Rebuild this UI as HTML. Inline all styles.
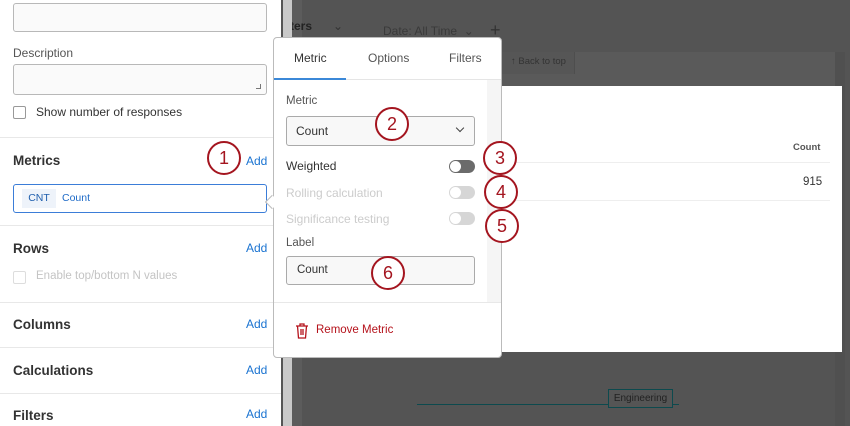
<!DOCTYPE html>
<html><head><meta charset="utf-8"><style>
*{box-sizing:border-box;margin:0;padding:0}
body{width:850px;height:426px;overflow:hidden;position:relative;font-family:"Liberation Sans",sans-serif;background:#555;color:#333}
.a{position:absolute}
.t{font-size:12px;white-space:nowrap}
.h{font-size:13.5px;font-weight:bold;color:#333}
.add{color:#1a73d1;font-size:12px}
.hr{height:1px;background:#e8e8e8}
.c{position:absolute;width:34px;height:34px;border:2.5px solid #a4151f;border-radius:50%;background:#fff;color:#a4151f;font-size:18px;text-align:center;line-height:31px}
.tg{position:absolute;width:26px;height:13px;border-radius:7px}
.tg::after{content:"";position:absolute;left:1px;top:1px;width:11px;height:11px;border-radius:50%;background:#fff}
</style></head><body>
<div class="a" style="left:292px;top:0;width:558px;height:426px;background:#545454"></div>
<div class="a" style="left:292px;top:0;width:10px;height:426px;background:#5c5c5c"></div>
<div class="a t" style="left:290px;top:19px;color:#222;font-weight:bold;font-size:12px">ters</div>
<div class="a t" style="left:333px;top:19px;color:#333;font-size:12px">&#8964;</div>
<div class="a t" style="left:383px;top:24px;color:#3a3a3a;font-size:12px">Date: All Time &nbsp;&#8964;</div>
<div class="a" style="left:490px;top:22px;color:#333;font-size:18px;line-height:16px">+</div>
<div class="a" style="left:500px;top:52px;width:335px;height:34px;background:#5a5a5a"></div>
<div class="a" style="left:500px;top:52px;width:75px;height:22px;background:#565656;border-right:1px solid #4e4e4e"></div>
<div class="a t" style="left:511px;top:56px;color:#333;font-size:9.5px">&#8593; Back to top</div>
<div class="a" style="left:835px;top:52px;width:10px;height:374px;background:#505050"></div>
<div class="a" style="left:502px;top:86px;width:340px;height:266px;background:#fff"></div>
<div class="a t" style="left:793px;top:142px;font-size:9.5px;font-weight:bold;color:#555">Count</div>
<div class="a" style="left:502px;top:162px;width:328px;height:1px;background:#eee"></div>
<div class="a t" style="left:803px;top:176px;font-size:11.5px;color:#333">915</div>
<div class="a" style="left:502px;top:200px;width:328px;height:1px;background:#eee"></div>
<div class="a" style="left:417px;top:404px;width:262px;height:1px;background:#0d4a4e"></div>
<div class="a t" style="left:608px;top:389px;width:65px;height:19px;border:1px solid #0d4a4e;background:#555;color:#222;font-size:10px;line-height:17px;text-align:center">Engineering</div>
<div class="a" style="left:0;top:0;width:281px;height:426px;background:#fff"></div>
<div class="a" style="left:283px;top:0;width:9px;height:426px;background:#c9c9c9"></div>
<div class="a" style="left:13px;top:3px;width:254px;height:29px;border:1px solid #b8b8b8;border-radius:3px;background:#fafafa"></div>
<div class="a t" style="left:13px;top:46px;color:#555">Description</div>
<div class="a" style="left:13px;top:64px;width:254px;height:31px;border:1px solid #b8b8b8;border-radius:3px;background:#fafafa"></div>
<div class="a" style="left:256px;top:84px;width:5px;height:5px;border-right:1px solid #777;border-bottom:1px solid #777"></div>
<div class="a" style="left:13px;top:106px;width:13px;height:13px;border:1px solid #999;border-radius:2px"></div>
<div class="a t" style="left:36px;top:105px;color:#333">Show number of responses</div>
<div class="a hr" style="left:0;top:137px;width:281px"></div>
<div class="a h" style="left:13px;top:153px">Metrics</div>
<div class="a add" style="left:246px;top:154px">Add</div>
<div class="a" style="left:13px;top:184px;width:254px;height:29px;border:1.5px solid #3b7dd8;border-radius:3px;background:#fff"></div>
<div class="a t" style="left:22px;top:189px;width:34px;height:19px;background:#eef3fa;color:#1f5fae;font-size:10.5px;line-height:19px;text-align:center">CNT</div>
<div class="a t" style="left:62px;top:192px;color:#1f6bc8;font-size:10.5px">Count</div>
<div class="a hr" style="left:0;top:225px;width:281px"></div>
<div class="a h" style="left:13px;top:241px">Rows</div>
<div class="a add" style="left:246px;top:241px">Add</div>
<div class="a" style="left:13px;top:271px;width:13px;height:13px;border:1px solid #ddd;border-radius:2px"></div>
<div class="a t" style="left:36px;top:270px;color:#c4c4c4;font-size:11.5px">Enable top/bottom N values</div>
<div class="a hr" style="left:0;top:302px;width:281px"></div>
<div class="a h" style="left:13px;top:317px">Columns</div>
<div class="a add" style="left:246px;top:317px">Add</div>
<div class="a hr" style="left:0;top:347px;width:281px"></div>
<div class="a h" style="left:13px;top:363px">Calculations</div>
<div class="a add" style="left:246px;top:363px">Add</div>
<div class="a hr" style="left:0;top:393px;width:281px"></div>
<div class="a h" style="left:13px;top:408px">Filters</div>
<div class="a add" style="left:246px;top:407px">Add</div>
<div class="a" style="left:273px;top:37px;width:229px;height:321px;background:#fff;border:1px solid #bbb;border-radius:4px"></div>
<div class="a" style="left:267px;top:197px;width:10px;height:10px;background:#fff;border-left:1px solid #bbb;border-bottom:1px solid #bbb;transform:rotate(45deg)"></div>
<div class="a t" style="left:294px;top:51px;color:#333;font-size:12px">Metric</div>
<div class="a t" style="left:368px;top:51px;color:#555;font-size:12px">Options</div>
<div class="a t" style="left:449px;top:51px;color:#555;font-size:12px">Filters</div>
<div class="a" style="left:274px;top:79px;width:227px;height:1px;background:#e5e5e5"></div>
<div class="a" style="left:274px;top:78px;width:72px;height:2px;background:#3b88d8"></div>
<div class="a" style="left:487px;top:80px;width:14px;height:222px;background:#f5f5f5"></div>
<div class="a t" style="left:286px;top:95px;color:#555;font-size:11.5px">Metric</div>
<div class="a" style="left:286px;top:116px;width:189px;height:30px;border:1px solid #aaa;border-radius:3px;background:#f8f8f8"></div>
<div class="a t" style="left:296px;top:124px;color:#333;font-size:12px">Count</div>
<div class="a" style="left:457px;top:125px;width:6px;height:6px;border-right:1.3px solid #444;border-bottom:1.3px solid #444;transform:rotate(45deg)"></div>
<div class="a t" style="left:286px;top:159px;color:#333;font-size:12px">Weighted</div>
<div class="tg" style="left:449px;top:160px;background:#6b6b6b"></div>
<div class="a t" style="left:286px;top:186px;color:#ccc;font-size:12px">Rolling calculation</div>
<div class="tg" style="left:449px;top:186px;background:#d6d6d6"></div>
<div class="a t" style="left:286px;top:212px;color:#ccc;font-size:12px">Significance testing</div>
<div class="tg" style="left:449px;top:212px;background:#d6d6d6"></div>
<div class="a t" style="left:286px;top:237px;color:#555;font-size:11.5px">Label</div>
<div class="a" style="left:286px;top:256px;width:189px;height:29px;border:1px solid #aaa;border-radius:3px;background:#f8f8f8"></div>
<div class="a t" style="left:297px;top:264px;color:#333;font-size:11.5px">Count</div>
<div class="a" style="left:274px;top:302px;width:227px;height:1px;background:#e8e8e8"></div>
<svg class="a" style="left:295px;top:323px" width="14" height="16" viewBox="0 0 14 16" fill="none" stroke="#b5121b" stroke-width="1.3"><path d="M1 3h12M5 3V1h4v2M2.5 3l1 12h7l1-12M6 6v6M8 6v6"/></svg>
<div class="a t" style="left:316px;top:324px;color:#b5121b;font-size:11.5px">Remove Metric</div>
<div class="c" style="left:207px;top:141px">1</div>
<div class="c" style="left:375px;top:107px">2</div>
<div class="c" style="left:483px;top:141px">3</div>
<div class="c" style="left:484px;top:175px">4</div>
<div class="c" style="left:485px;top:209px">5</div>
<div class="c" style="left:371px;top:256px">6</div>
</body></html>
